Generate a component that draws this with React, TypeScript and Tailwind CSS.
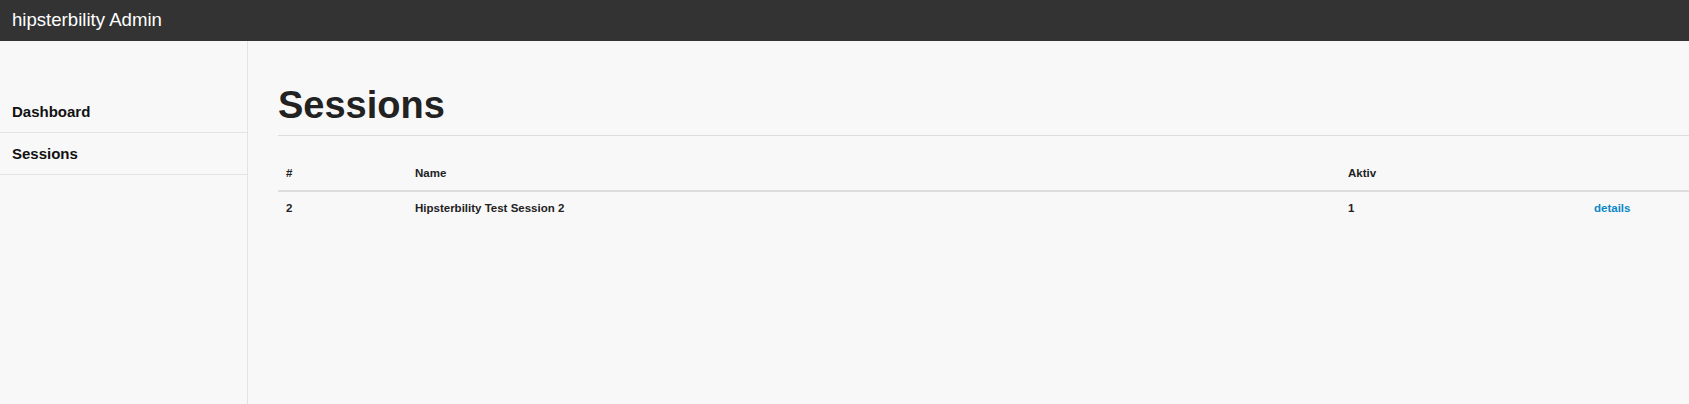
const sessions = [{ id: 2, name: "Hipsterbility Test Session 2", active: 1 }];

const navItems = ["Dashboard", "Sessions"];

export default function App() {
	return (
		<div
			className="flex h-[404px] w-[1689px] flex-col overflow-hidden bg-[#f8f8f8] text-[#222]"
			style={{ fontFamily: '"Liberation Sans", Arial, sans-serif' }}
		>
			<div className="flex h-[41px] shrink-0 items-center bg-[#333] pl-[12px]">
				<span className="text-[18.6px] leading-none text-white">hipsterbility Admin</span>
			</div>
			<div className="flex flex-1">
				<div className="w-[248px] shrink-0 border-r border-[#e3e3e3] pt-[50px]">
					{navItems.map((item) => (
						<div
							key={item}
							className="border-b border-[#e3e3e3] px-[12px] py-[12px] text-[15px] font-bold leading-[17px] text-[#111]"
						>
							{item}
						</div>
					))}
				</div>
				<div className="flex-1 pl-[30px] pt-[42px]">
					<h1 className="border-b border-[#ddd] pb-[8px] text-[38px] font-bold leading-[44px] text-[#222]">
						Sessions
					</h1>
					<table className="mt-[20px] w-[1411px] table-fixed border-collapse text-[11.5px] font-bold text-[#222]">
						<thead>
							<tr className="border-b-2 border-[#ddd]">
								<th className="w-[129px] px-[8px] py-[8px] text-left leading-[18px]">#</th>
								<th className="w-[933px] px-[8px] py-[8px] text-left leading-[18px]">Name</th>
								<th className="w-[246px] px-[8px] py-[8px] text-left leading-[18px]">Aktiv</th>
								<th className="px-[8px] py-[8px] text-left leading-[18px]"></th>
							</tr>
						</thead>
						<tbody>
							{sessions.map((s) => (
								<tr key={s.id}>
									<td className="px-[8px] pb-[8px] pt-[7px] leading-[18px]">{s.id}</td>
									<td className="px-[8px] pb-[8px] pt-[7px] leading-[18px]">{s.name}</td>
									<td className="px-[8px] pb-[8px] pt-[7px] leading-[18px]">{s.active}</td>
									<td className="px-[8px] pb-[8px] pt-[7px] leading-[18px]">
										<a href="#" className="text-[#0a88c8]">
											details
										</a>
									</td>
								</tr>
							))}
						</tbody>
					</table>
				</div>
			</div>
		</div>
	);
}
